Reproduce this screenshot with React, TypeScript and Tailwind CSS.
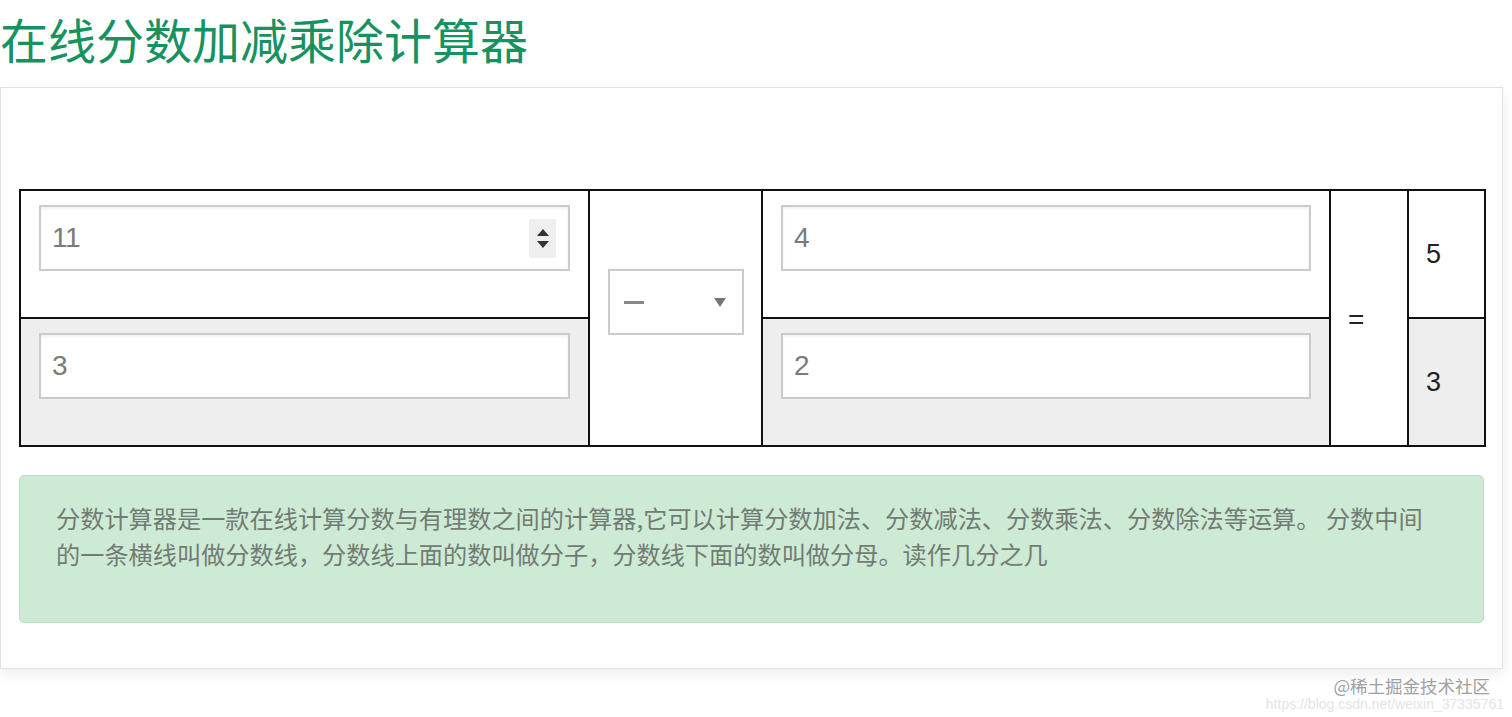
import { useState } from 'react'

const font = { fontFamily: '"Liberation Sans", "Noto Sans CJK SC", sans-serif' }
const cjk = { fontFamily: '"Noto Sans CJK SC", sans-serif' }

function Spinner() {
  return (
    <div className="flex flex-col items-center justify-center gap-[5px] w-[27px] h-[39px] bg-[#efefef] rounded-[2px]">
      <svg width="12" height="7" viewBox="0 0 12 7">
        <path d="M6 0 L12 7 L0 7 Z" fill="#333" />
      </svg>
      <svg width="12" height="7" viewBox="0 0 12 7">
        <path d="M0 0 L12 0 L6 7 Z" fill="#333" />
      </svg>
    </div>
  )
}

function NumBox({ value, spin }: { value: string; spin?: boolean }) {
  const [v, setV] = useState(value)
  return (
    <div className="flex items-center h-[66px] w-full bg-white border-2 border-[#cbcbcb] shadow-[inset_0_2px_3px_rgba(0,0,0,0.06)] pl-[11px] pr-[12px]">
      <input
        value={v}
        onChange={(e) => setV(e.target.value)}
        className="flex-1 min-w-0 bg-transparent outline-none text-[28px] text-[#7a7a7a] tracking-[-0.5px]"
        style={font}
      />
      {spin && <Spinner />}
    </div>
  )
}

export default function App() {
  return (
    <div className="relative w-[1512px] h-[717px] bg-white overflow-hidden" style={font}>
      {/* Title */}
      <h1 className="pt-[8px] mb-[19px] text-[48px] leading-[60px] text-[#17925f] whitespace-nowrap" style={cjk}>
        在线分数加减乘除计算器
      </h1>

      {/* Panel */}
      <div className="w-[1503px] bg-white border border-[#e2e2e2] shadow-[0_6px_12px_rgba(0,0,0,0.07)] pt-[101px] px-[18px] pb-[45px]">
        <table className="table-fixed border-collapse w-[1465px] border-2 border-[#111]">
          <colgroup>
            <col className="w-[569px]" />
            <col className="w-[173px]" />
            <col className="w-[568px]" />
            <col className="w-[78px]" />
            <col className="w-[77px]" />
          </colgroup>
          <tbody>
            <tr className="h-[128px]">
              <td className="border-2 border-[#111] align-top px-[18px] pt-[14px]">
                <NumBox value="11" spin />
              </td>
              <td rowSpan={2} className="border-2 border-[#111] align-middle">
                <div className="mx-auto mb-[32px] flex items-center justify-between w-[136px] h-[66px] border-2 border-[#cbcbcb] bg-white pl-[14px] pr-[16px]">
                  <span className="block w-[20px] h-[3px] bg-[#888]" />
                  <svg width="12" height="9" viewBox="0 0 12 9">
                    <path d="M0 0 L12 0 L6 9 Z" fill="#777" />
                  </svg>
                </div>
              </td>
              <td className="border-2 border-[#111] align-top px-[18px] pt-[14px]">
                <NumBox value="4" />
              </td>
              <td rowSpan={2} className="border-2 border-[#111] align-middle pl-[17px] pt-[4px] text-[28px] text-[#222]">
                =
              </td>
              <td className="border-2 border-[#111] align-middle pl-[17px] text-[27px] text-[#222]">5</td>
            </tr>
            <tr className="h-[128px] bg-[#eeeeee]">
              <td className="border-2 border-[#111] align-top px-[18px] pt-[14px]">
                <NumBox value="3" />
              </td>
              <td className="border-2 border-[#111] align-top px-[18px] pt-[14px]">
                <NumBox value="2" />
              </td>
              <td className="border-2 border-[#111] align-middle pl-[17px] text-[27px] text-[#222]">3</td>
            </tr>
          </tbody>
        </table>

        {/* Info */}
        <div
          className="mt-[28px] h-[148px] w-[1465px] bg-[#cdebd4] border border-[#b8dfc1] rounded-[5px] pl-[36px] pr-[37px] pt-[24px] text-[24.2px] leading-[36px] text-[#737b75]"
          style={cjk}
        >
          分数计算器是一款在线计算分数与有理数之间的计算器,它可以计算分数加法、分数减法、分数乘法、分数除法等运算。 分数中间的一条横线叫做分数线，分数线上面的数叫做分子，分数线下面的数叫做分母。读作几分之几
        </div>
      </div>

      {/* Watermark */}
      <div className="absolute right-[8px] bottom-[6px] flex flex-col items-end leading-none pointer-events-none">
        <span className="text-[17.5px] text-[#a0a0a0] mr-[14px]" style={cjk}>
          @稀土掘金技术社区
        </span>
        <span className="text-[14px] text-[#e4e4e4] mt-[3px]">https://blog.csdn.net/weixin_37335761</span>
      </div>
    </div>
  )
}
